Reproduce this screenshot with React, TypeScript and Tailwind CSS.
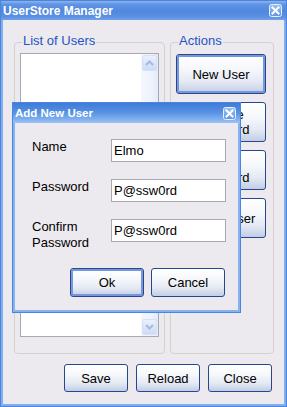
import clsx from 'clsx';

const btnBase =
  'flex items-center justify-center rounded-[3px] border border-[#26488E] text-black text-[13px] leading-[15px] text-center bg-[linear-gradient(to_bottom,#FFFFFF_0%,#F7F8FB_35%,#E4E9F3_70%,#C3CDE4_100%)]';

function XpButton({
  children,
  isDefault,
  className,
}: {
  children: React.ReactNode;
  isDefault?: boolean;
  className?: string;
}) {
  return (
    <button
      type="button"
      className={clsx(btnBase, isDefault && 'shadow-[inset_0_0_0_2px_#7896DC]', className)}
    >
      {children}
    </button>
  );
}

function CloseBox() {
  return (
    <svg width="13" height="13" viewBox="0 0 13 13">
      <defs>
        <linearGradient id="cb" x1="0" y1="0" x2="0" y2="1">
          <stop offset="0" stopColor="#9CC0F5" />
          <stop offset="1" stopColor="#5F93E4" />
        </linearGradient>
      </defs>
      <rect x="0.5" y="0.5" width="12" height="12" rx="2" fill="url(#cb)" stroke="#E8F0FD" />
      <path d="M3.5 3.5 L9.5 9.5 M9.5 3.5 L3.5 9.5" stroke="#FFFFFF" strokeWidth="2" strokeLinecap="square" />
    </svg>
  );
}

function ScrollArrow({ up }: { up?: boolean }) {
  return (
    <div className="h-[16px] mx-[1px] rounded-[2px] border border-[#D6E1F7] bg-[linear-gradient(to_bottom,#EAF0FD,#CDDBF8)] flex items-center justify-center">
      <svg width="9" height="6" viewBox="0 0 9 6">
        <polyline
          points={up ? '1,5 4.5,1.5 8,5' : '1,1 4.5,4.5 8,1'}
          fill="none"
          stroke="#A7B9DE"
          strokeWidth="2"
        />
      </svg>
    </div>
  );
}

function Group({ title, children, className }: { title: string; children: React.ReactNode; className?: string }) {
  return (
    <div className={clsx('h-[312px] flex flex-col border border-[#D3D1CC] rounded-[4px]', className)}>
      <span className="self-start -mt-[10px] ml-[7px] px-[1px] bg-[#ECEAEF] text-[#2553C3] text-[13px] leading-[15px]">
        {title}
      </span>
      {children}
    </div>
  );
}

export default function App() {
  return (
    <div className="relative w-[287px] h-[407px] flex flex-col border border-[#4A84DB] bg-[#80AEEE] font-['Liberation_Sans',Arial,sans-serif] text-[13px] text-black">
      {/* Title bar */}
      <div className="h-[19px] flex items-center justify-between pl-[2px] pr-[4px] bg-[linear-gradient(to_bottom,#8DB4F0_0%,#5F93E4_18%,#4F88DE_55%,#5C92E4_85%,#73A2EA_100%)]">
        <span className="text-white font-bold text-[12px] leading-[14px] pt-[1px]">UserStore Manager</span>
        <CloseBox />
      </div>

      {/* Body */}
      <div className="flex-1 mx-[2px] mb-[2px] bg-[#ECEAEF] flex flex-col">
        <div className="mt-[22px] pl-[11px] flex gap-[5px]">
          <Group title="List of Users" className="w-[151px]">
            <div className="mt-[5px] ml-[5px] w-[139px] h-[284px] border border-[#A5AAB2] bg-white flex">
              <div className="flex-1" />
              <div className="w-[17px] flex flex-col justify-between py-[1px] bg-[linear-gradient(to_right,#F4F7FD,#EEF3FD_60%,#E2EAFA)]">
                <ScrollArrow up />
                <ScrollArrow />
              </div>
            </div>
          </Group>

          <Group title="Actions" className="w-[104px]">
            <div className="mt-[6px] ml-[5px] flex flex-col gap-[8px]">
              <XpButton isDefault className="w-[90px] h-[40px]">New User</XpButton>
              <XpButton className="w-[90px] h-[40px]">
                Change
                <br />
                Password
              </XpButton>
              <XpButton className="w-[90px] h-[40px]">
                Reset
                <br />
                Password
              </XpButton>
              <XpButton className="w-[90px] h-[40px]">Delete User</XpButton>
            </div>
          </Group>
        </div>

        <div className="mt-[10px] pr-[12px] flex justify-end gap-[8px]">
          <XpButton className="w-[64px] h-[28px]">Save</XpButton>
          <XpButton className="w-[64px] h-[28px]">Reload</XpButton>
          <XpButton className="w-[64px] h-[28px]">Close</XpButton>
        </div>
      </div>

      {/* Add New User dialog */}
      <div className="absolute left-[11px] top-[101px] w-[229px] h-[211px] flex flex-col border border-[#4C86DC] bg-[#86B3F0]">
        <div className="h-[20px] flex items-center justify-between pl-[2px] pr-[4px] bg-[linear-gradient(to_bottom,#3E7BD9_0%,#5590E2_45%,#7FAEEE_80%,#9CC3F4_100%)]">
          <span className="text-white font-bold text-[11.5px] leading-[14px]">Add New User</span>
          <CloseBox />
        </div>
        <div className="flex-1 mx-[2px] mb-[2px] bg-[#ECEAEF] pt-[16px] pl-[17px] pr-[12px] flex flex-col gap-[17px]">
          <div className="flex items-start">
            <span className="w-[79px] leading-[16px]">Name</span>
            <div className="w-[115px] h-[23px] border border-[#A5AAB2] bg-white pl-[2px] flex items-center">Elmo</div>
          </div>
          <div className="flex items-start">
            <span className="w-[79px] leading-[16px]">Password</span>
            <div className="w-[115px] h-[23px] border border-[#A5AAB2] bg-white pl-[2px] flex items-center">P@ssw0rd</div>
          </div>
          <div className="flex items-start">
            <span className="w-[79px] leading-[16px]">
              Confirm
              <br />
              Password
            </span>
            <div className="w-[115px] h-[23px] border border-[#A5AAB2] bg-white pl-[2px] flex items-center">P@ssw0rd</div>
          </div>
          <div className="flex justify-end gap-[7px] pr-[1px]">
            <XpButton isDefault className="w-[74px] h-[29px]">Ok</XpButton>
            <XpButton className="w-[74px] h-[29px]">Cancel</XpButton>
          </div>
        </div>
      </div>
    </div>
  );
}
